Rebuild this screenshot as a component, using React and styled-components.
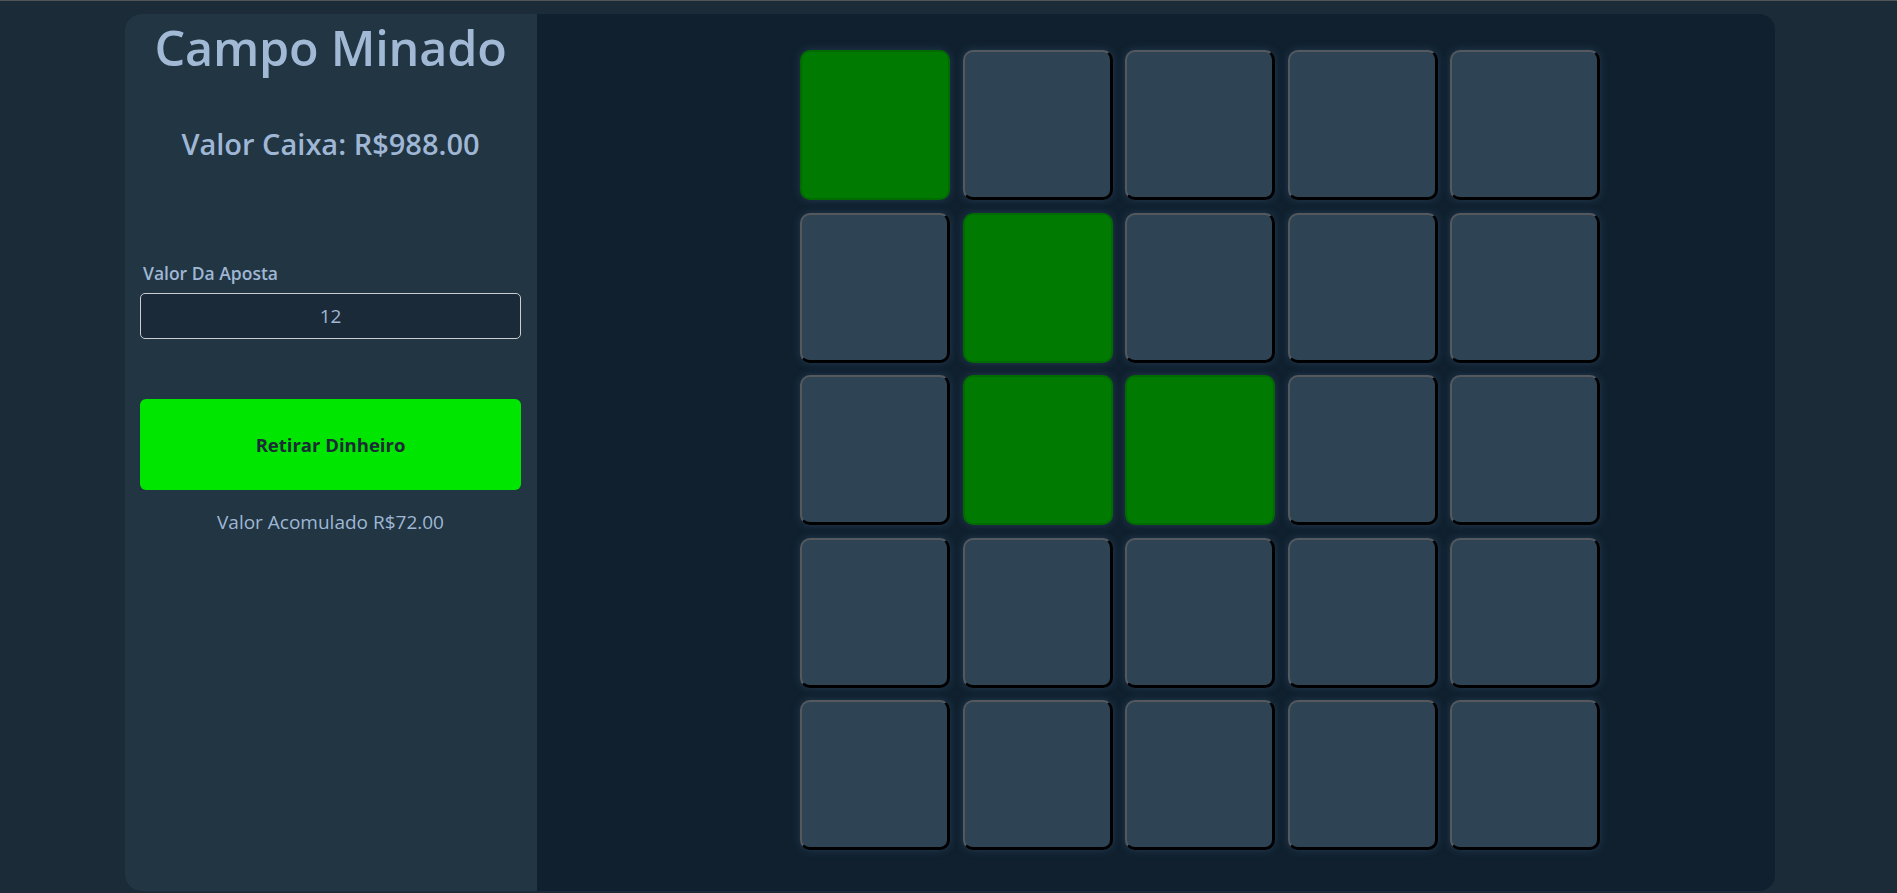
import React, { useState } from 'react'
import styled, { createGlobalStyle } from 'styled-components'

const GlobalStyle = createGlobalStyle`
  html, body {
    margin: 0;
    padding: 0;
    background: #1b2b38;
  }
  body {
    font-family: "Open Sans", "Noto Sans", sans-serif;
    border-top: 1px solid #50555a;
    height: 892px;
    box-sizing: border-box;
    overflow: hidden;
  }
`

const Page = styled.div`
  display: flex;
  justify-content: flex-start;
  padding: 13px 0 0 125px;
`

const Board = styled.div`
  width: 1650px;
  height: 877px;
  display: flex;
  border-radius: 16px;
  overflow: hidden;
  background: #10202e;
`

const Sidebar = styled.div`
  width: 412px;
  background: #213543;
  display: flex;
  flex-direction: column;
  align-items: center;
  padding: 0 16px 0 15px;
  box-sizing: border-box;
  color: #9fb7d4;
`

const Title = styled.h1`
  margin: 0;
  font-size: 48.5px;
  font-weight: 600;
  letter-spacing: -0.2px;
  color: #a1b9d5;
`

const Balance = styled.h2`
  margin: 44px 0 0;
  font-size: 29px;
  font-weight: 600;
  color: #9fb7d4;
`

const Field = styled.div`
  width: 100%;
  margin-top: 98px;
  display: flex;
  flex-direction: column;
`

const Label = styled.label`
  font-size: 17.5px;
  font-weight: 600;
  margin: 0 0 8px 3px;
  color: #9fb7d4;
`

const Input = styled.input`
  height: 46px;
  box-sizing: border-box;
  border: 1px solid #c9ced3;
  border-radius: 5px;
  background: #1b2a38;
  color: #9fb7d4;
  font-family: inherit;
  font-size: 19px;
  text-align: center;
  outline: none;
`

const CashButton = styled.button`
  width: 100%;
  height: 91px;
  margin-top: 60px;
  border: none;
  border-radius: 6px;
  background: #00e600;
  color: #1d2b36;
  font-family: inherit;
  font-size: 18.5px;
  font-weight: 700;
  cursor: pointer;
`

const Accumulated = styled.p`
  margin: 19px 0 0;
  font-size: 19px;
  color: #9fb7d4;
`

const Main = styled.div`
  flex: 1;
  padding: 36px 0 0 263px;
`

const Grid = styled.div`
  display: grid;
  grid-template-columns: repeat(5, 150px);
  grid-auto-rows: 150px;
  gap: 12.5px;
`

const Tile = styled.button`
  box-sizing: border-box;
  border-radius: 10px;
  border-style: solid;
  border-width: ${p => p.open ? '2px' : '2px 3px 3px 2px'};
  border-color: ${p => p.open ? '#006b00' : '#55595e #000 #000 #55595e'};
  background: ${p => p.open ? '#007a00' : '#2e4454'};
  box-shadow: 0 0 9px rgba(70, 110, 150, 0.35);
  padding: 0;
  cursor: pointer;
`

const opened = [0, 6, 11, 12]

const App = () => {
  const [bet, setBet] = useState("12")

  return (
    <Page>
      <GlobalStyle />
      <Board>
        <Sidebar>
          <Title>Campo Minado</Title>
          <Balance>Valor Caixa: R$988.00</Balance>
          <Field>
            <Label>Valor Da Aposta</Label>
            <Input value={bet} onChange={e => setBet(e.target.value)} />
          </Field>
          <CashButton>Retirar Dinheiro</CashButton>
          <Accumulated>Valor Acomulado R$72.00</Accumulated>
        </Sidebar>
        <Main>
          <Grid>
            {Array.from({ length: 25 }).map((_, i) => (
              <Tile key={i} open={opened.includes(i)} />
            ))}
          </Grid>
        </Main>
      </Board>
    </Page>
  )
}

export default App
